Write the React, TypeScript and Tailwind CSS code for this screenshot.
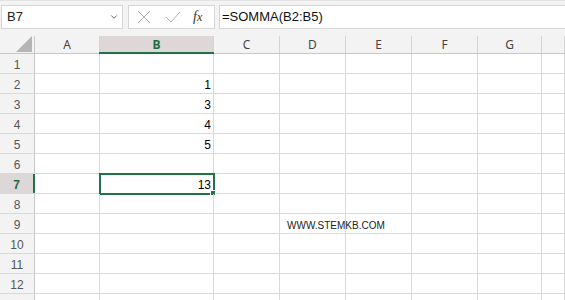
import { ChevronDown } from "lucide-react";

const cols = [
  { name: "A", w: "w-[65px]" },
  { name: "B", w: "w-[114px]" },
  { name: "C", w: "w-[66px]" },
  { name: "D", w: "w-[66px]" },
  { name: "E", w: "w-[66px]" },
  { name: "F", w: "w-[66px]" },
  { name: "G", w: "w-[64px]" },
  { name: "", w: "flex-1" },
];

const values: Record<string, string> = {
  B2: "1",
  B3: "3",
  B4: "4",
  B5: "5",
  B7: "13",
};

function FormulaBar() {
  return (
    <div className="h-[36px] flex items-start pt-[4px] bg-[#f3f3f3] border-t border-[#e3e3e3] font-['Liberation_Sans',sans-serif]">
      {/* Name box */}
      <div className="ml-[1px] w-[122px] h-[24px] bg-white border border-[#d6d6d6] flex items-center justify-between pl-[5px] pr-[3px] text-[13px] text-[#222]">
        <span>B7</span>
        <ChevronDown size={10} strokeWidth={2} className="text-[#444]" />
      </div>
      {/* Cancel / enter / fx */}
      <div className="ml-[5px] w-[87px] h-[24px] bg-white border border-[#d6d6d6] flex items-center">
        <svg width="14" height="14" viewBox="0 0 14 14" className="ml-[8px]">
          <path d="M1 1 L13 13 M13 1 L1 13" stroke="#b0b0b0" strokeWidth="1" fill="none" />
        </svg>
        <svg width="16" height="12" viewBox="0 0 16 12" className="ml-[14px]">
          <path d="M1 6 L6 11 L15 1" stroke="#b0b0b0" strokeWidth="1" fill="none" />
        </svg>
        <span className="ml-[12px] font-['Liberation_Serif',serif] italic text-[14px] text-[#333] leading-none">
          f<span className="text-[12px]">x</span>
        </span>
      </div>
      {/* Formula */}
      <div className="ml-[4px] flex-1 h-[24px] bg-white border border-r-0 border-[#d6d6d6] flex items-center pl-[2px] text-[13px] text-[#111]">
        =SOMMA(B2:B5)
      </div>
    </div>
  );
}

function HeaderRow() {
  return (
    <div className="flex h-[18px] bg-[#f3f3f3] border-b border-[#c8c8c8]">
      <div className="w-[35px] h-full border-r border-[#c8c8c8] flex items-end justify-end pr-[2px] pb-[1px]">
        <svg width="16" height="16" viewBox="0 0 16 16">
          <polygon points="16,0 16,16 0,16" fill="#b5b5b5" />
        </svg>
      </div>
      {cols.map((c) => {
        const sel = c.name === "B";
        return (
          <div
            key={c.name || "H"}
            className={
              c.w +
              " h-full flex items-center justify-center text-[12px] border-r border-[#d4d4d4] " +
              (sel
                ? "bg-[#ddd7d7] text-[#1e6b41] font-bold relative"
                : "text-[#444]")
            }
          >
            {c.name}
            {sel && <div className="absolute -left-[1px] -right-[1px] -bottom-[1px] h-[2px] bg-[#217346]" />}
          </div>
        );
      })}
    </div>
  );
}

function Row({ n }: { n: number }) {
  const sel = n === 7;
  return (
    <div className="flex h-[20px] bg-white border-b border-[#d9d9d9]">
      <div
        className={
          "w-[35px] h-full flex items-center justify-center pt-[2px] text-[12px] " +
          (sel
            ? "bg-[#ddd7d7] text-[#1e6b41] font-bold border-r-2 border-[#217346]"
            : "bg-[#f3f3f3] text-[#555] border-r border-[#c8c8c8]")
        }
      >
        {n < 13 ? n : ""}
      </div>
      {cols.map((c) => {
        const id = c.name + n;
        const v = values[id];
        return (
          <div
            key={c.name || "H"}
            className={c.w + " h-full border-r border-[#d9d9d9] relative text-[12px] leading-[16px] pt-[3px] text-black"}
          >
            {v && <div className="text-right pr-[2px]">{v}</div>}
            {id === "D9" && (
              <div className="whitespace-nowrap pl-[7px] pt-[1px] text-[10px] text-[#222]">WWW.STEMKB.COM</div>
            )}
            {id === "B7" && (
              <>
                <div className="absolute -left-[1px] -top-[1px] w-[116px] h-[22px] border-2 border-[#217346]" />
                <div className="absolute -right-[3px] -bottom-[3px] w-[6px] h-[6px] bg-[#217346] border border-white" />
              </>
            )}
          </div>
        );
      })}
    </div>
  );
}

export default function App() {
  const rows = Array.from({ length: 13 }, (_, i) => i + 1);
  return (
    <div className="w-[565px] h-[300px] overflow-hidden bg-[#f3f3f3] font-['Noto_Sans','Liberation_Sans',sans-serif]">
      <FormulaBar />
      <div className="font-['Noto_Sans',sans-serif]">
        <HeaderRow />
        <div className="font-['Liberation_Sans',sans-serif]">
          {rows.map((n) => (
            <Row key={n} n={n} />
          ))}
        </div>
      </div>
    </div>
  );
}
